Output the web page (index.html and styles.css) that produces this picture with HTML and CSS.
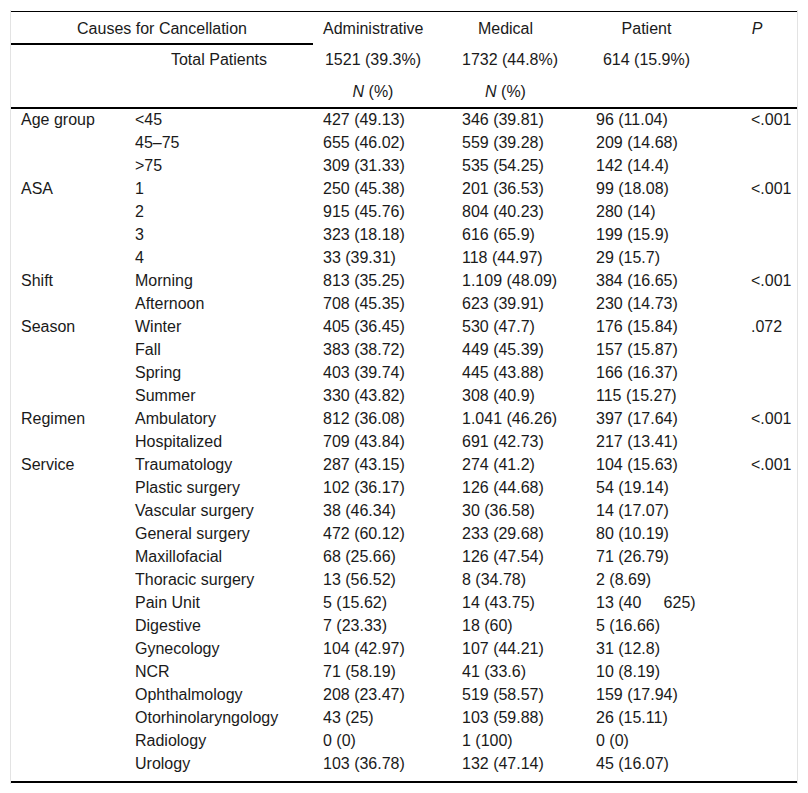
FILE: index.html
```html
<!DOCTYPE html>
<html lang="en">
<head>
<meta charset="utf-8">
<title>Causes for Cancellation</title>
<link rel="stylesheet" href="styles.css">
</head>
<body>
<div class="frame">
<table class="data">
<colgroup>
<col class="c1"><col class="c2"><col class="c3"><col class="c4"><col class="c5"><col class="c6">
</colgroup>
<thead>
<tr class="h1">
<th colspan="2" class="causes">Causes for Cancellation</th>
<th class="adm">Administrative</th>
<th class="med">Medical</th>
<th class="pat">Patient</th>
<th class="pv"><i>P</i></th>
</tr>
<tr class="h2">
<th></th>
<th class="tot">Total Patients</th>
<th class="adm">1521 (39.3%)</th>
<th class="med">1732 (44.8%)</th>
<th class="pat">614 (15.9%)</th>
<th class="pv"></th>
</tr>
<tr class="h3">
<th></th>
<th></th>
<th class="adm"><i>N</i> (%)</th>
<th class="med"><i>N</i> (%)</th>
<th></th>
<th></th>
</tr>
</thead>
<tbody>
<tr><td>Age group</td><td>&lt;45</td><td>427 (49.13)</td><td>346 (39.81)</td><td>96 (11.04)</td><td>&lt;.001</td></tr>
<tr><td></td><td>45–75</td><td>655 (46.02)</td><td>559 (39.28)</td><td>209 (14.68)</td><td></td></tr>
<tr><td></td><td>&gt;75</td><td>309 (31.33)</td><td>535 (54.25)</td><td>142 (14.4)</td><td></td></tr>
<tr><td>ASA</td><td>1</td><td>250 (45.38)</td><td>201 (36.53)</td><td>99 (18.08)</td><td>&lt;.001</td></tr>
<tr><td></td><td>2</td><td>915 (45.76)</td><td>804 (40.23)</td><td>280 (14)</td><td></td></tr>
<tr><td></td><td>3</td><td>323 (18.18)</td><td>616 (65.9)</td><td>199 (15.9)</td><td></td></tr>
<tr><td></td><td>4</td><td>33 (39.31)</td><td>118 (44.97)</td><td>29 (15.7)</td><td></td></tr>
<tr><td>Shift</td><td>Morning</td><td>813 (35.25)</td><td>1.109 (48.09)</td><td>384 (16.65)</td><td>&lt;.001</td></tr>
<tr><td></td><td>Afternoon</td><td>708 (45.35)</td><td>623 (39.91)</td><td>230 (14.73)</td><td></td></tr>
<tr><td>Season</td><td>Winter</td><td>405 (36.45)</td><td>530 (47.7)</td><td>176 (15.84)</td><td>.072</td></tr>
<tr><td></td><td>Fall</td><td>383 (38.72)</td><td>449 (45.39)</td><td>157 (15.87)</td><td></td></tr>
<tr><td></td><td>Spring</td><td>403 (39.74)</td><td>445 (43.88)</td><td>166 (16.37)</td><td></td></tr>
<tr><td></td><td>Summer</td><td>330 (43.82)</td><td>308 (40.9)</td><td>115 (15.27)</td><td></td></tr>
<tr><td>Regimen</td><td>Ambulatory</td><td>812 (36.08)</td><td>1.041 (46.26)</td><td>397 (17.64)</td><td>&lt;.001</td></tr>
<tr><td></td><td>Hospitalized</td><td>709 (43.84)</td><td>691 (42.73)</td><td>217 (13.41)</td><td></td></tr>
<tr><td>Service</td><td>Traumatology</td><td>287 (43.15)</td><td>274 (41.2)</td><td>104 (15.63)</td><td>&lt;.001</td></tr>
<tr><td></td><td>Plastic surgery</td><td>102 (36.17)</td><td>126 (44.68)</td><td>54 (19.14)</td><td></td></tr>
<tr><td></td><td>Vascular surgery</td><td>38 (46.34)</td><td>30 (36.58)</td><td>14 (17.07)</td><td></td></tr>
<tr><td></td><td>General surgery</td><td>472 (60.12)</td><td>233 (29.68)</td><td>80 (10.19)</td><td></td></tr>
<tr><td></td><td>Maxillofacial</td><td>68 (25.66)</td><td>126 (47.54)</td><td>71 (26.79)</td><td></td></tr>
<tr><td></td><td>Thoracic surgery</td><td>13 (56.52)</td><td>8 (34.78)</td><td>2 (8.69)</td><td></td></tr>
<tr><td></td><td>Pain Unit</td><td>5 (15.62)</td><td>14 (43.75)</td><td>13 (40&nbsp;&nbsp;&nbsp;&nbsp;&nbsp;625)</td><td></td></tr>
<tr><td></td><td>Digestive</td><td>7 (23.33)</td><td>18 (60)</td><td>5 (16.66)</td><td></td></tr>
<tr><td></td><td>Gynecology</td><td>104 (42.97)</td><td>107 (44.21)</td><td>31 (12.8)</td><td></td></tr>
<tr><td></td><td>NCR</td><td>71 (58.19)</td><td>41 (33.6)</td><td>10 (8.19)</td><td></td></tr>
<tr><td></td><td>Ophthalmology</td><td>208 (23.47)</td><td>519 (58.57)</td><td>159 (17.94)</td><td></td></tr>
<tr><td></td><td>Otorhinolaryngology</td><td>43 (25)</td><td>103 (59.88)</td><td>26 (15.11)</td><td></td></tr>
<tr><td></td><td>Radiology</td><td>0 (0)</td><td>1 (100)</td><td>0 (0)</td><td></td></tr>
<tr class="last"><td></td><td>Urology</td><td>103 (36.78)</td><td>132 (47.14)</td><td>45 (16.07)</td><td></td></tr>
</tbody>
</table>
</div>
</body>
</html>
```

FILE: styles.css
```css
html, body {
  margin: 0;
  padding: 0;
  background: #ffffff;
}

body {
  font-family: "Liberation Sans", Arial, sans-serif;
  font-size: 16px;
  color: #1a1a1a;
}

.frame {
  margin: 10px 0 0 10px;
  width: 786px;
  padding-top: 1px;
  padding-bottom: 1px;
  border-left: 1px solid #e3e3e3;
  border-right: 1px solid #e3e3e3;
}

.data {
  width: 786px;
  table-layout: fixed;
  border-collapse: separate;
  border-spacing: 0;
  border-top: 1px solid #000;
  border-bottom: 2px solid #000;
}

.c1 { width: 114px; }
.c2 { width: 188px; }
.c3 { width: 139px; }
.c4 { width: 134px; }
.c5 { width: 155px; }
.c6 { width: 56px; }

th {
  font-weight: normal;
  text-align: center;
  vertical-align: middle;
  line-height: 18px;
  padding: 7px 10px 7px 10px;
  white-space: nowrap;
}

.h1 th {
  padding-top: 8px;
  padding-bottom: 7px;
}

.h1 .causes {
  border-bottom: 2px solid #000;
  padding-bottom: 5px;
}

.h2 th {
  padding-top: 6px;
  padding-bottom: 7px;
}

.h3 th {
  border-bottom: 2px solid #000;
  padding-top: 7px;
  padding-bottom: 6px;
}

th.adm { padding-right: 29px; }
th.med { padding-right: 37px; }
th.pat { padding-right: 44px; }
th.pv { padding-right: 34px; }

td {
  text-align: left;
  vertical-align: middle;
  line-height: 18px;
  padding: 2px 10px 3px 10px;
  white-space: nowrap;
}

.last td { padding-bottom: 8px; }
```
